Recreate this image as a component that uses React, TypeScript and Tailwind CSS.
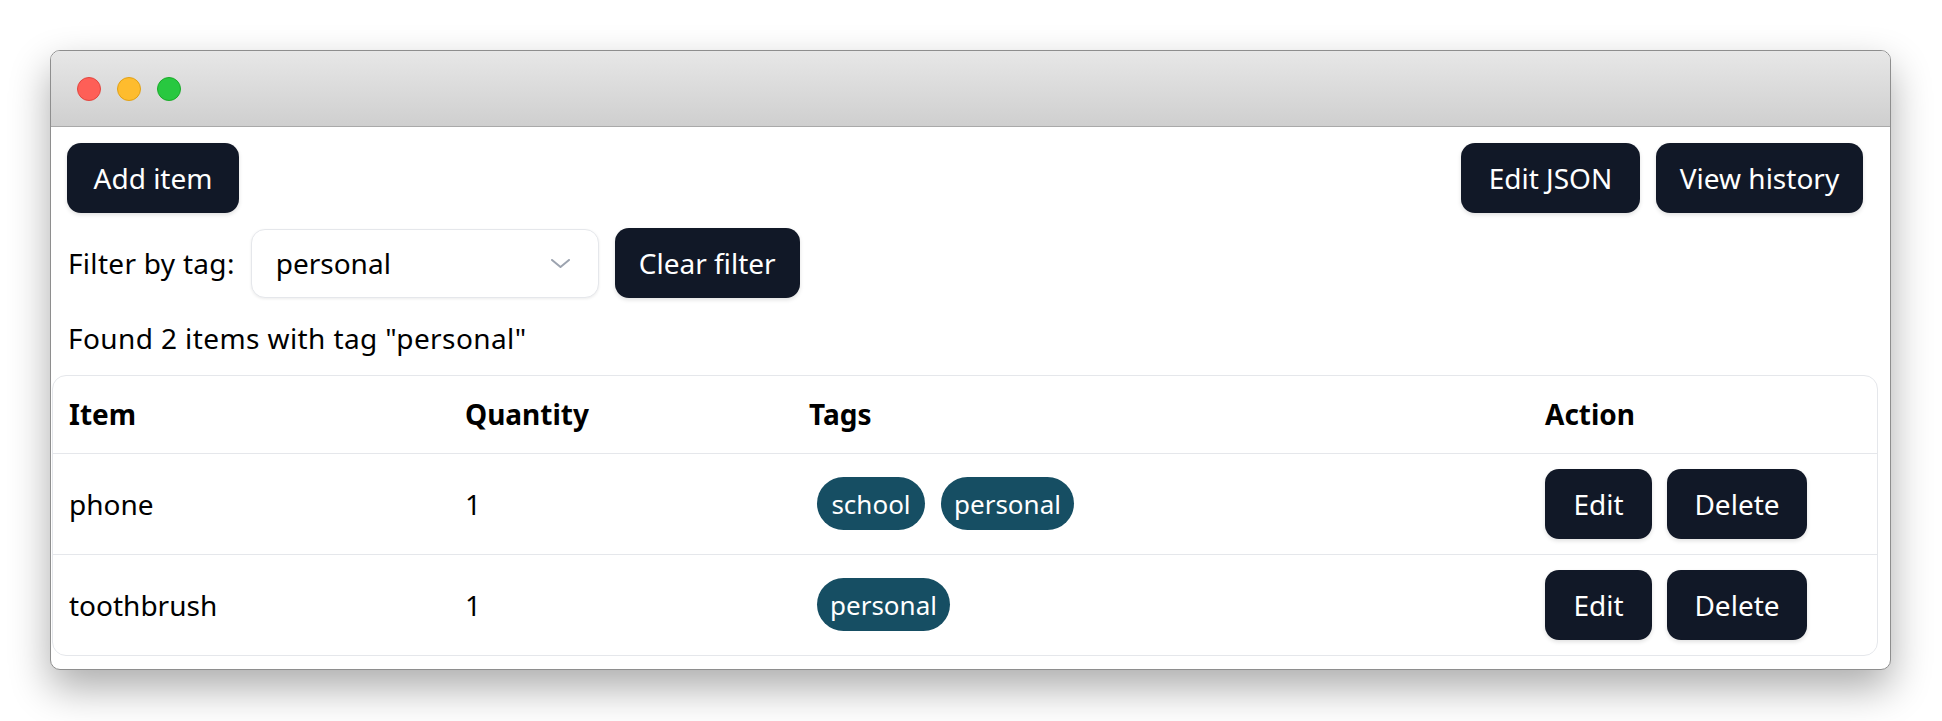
import React from "react";

const rows = [
  { name: "phone", qty: 1, tags: ["school", "personal"] },
  { name: "toothbrush", qty: 1, tags: ["personal"] },
];

// pill widths follow the screenshot
const tagWidth: Record<string, string> = {
  school: "w-[108px]",
  personal: "w-[133px]",
};

function DarkButton({ label, w }: { label: string; w: string }) {
  return (
    <button
      className={`${w} h-[70px] shrink-0 rounded-[14px] bg-[#111827] text-white text-[28px] leading-[42px] shadow-[0_2px_4px_rgba(0,0,0,0.12)] flex items-center justify-center`}
    >
      {label}
    </button>
  );
}

export default function App() {
  return (
    <div className="min-h-screen bg-white pt-[50px] pl-[50px] font-['Noto_Sans',sans-serif] text-black">
      <div className="w-[1841px] rounded-[10px] border border-[#8e8e8e] bg-white overflow-hidden shadow-[0_18px_40px_rgba(0,0,0,0.33)]">
        {/* title bar */}
        <div className="h-[76px] border-b border-[#a9a9a9] bg-gradient-to-b from-[#e7e7e7] to-[#cfcfcf] flex items-center gap-4 pl-[26px]">
          <span className="w-6 h-6 rounded-full bg-[#fe5f57] border border-[#e2463f]" />
          <span className="w-6 h-6 rounded-full bg-[#febc2e] border border-[#e1a116]" />
          <span className="w-6 h-6 rounded-full bg-[#28c840] border border-[#1aab29]" />
        </div>

        <div className="pl-px pr-[12px] pt-4 pb-[13px] text-[28px] leading-[42px]">
          <div className="px-[15px]">
            <div className="flex justify-between">
              <DarkButton label="Add item" w="w-[172px]" />
              <div className="flex gap-4">
                <DarkButton label="Edit JSON" w="w-[179px]" />
                <DarkButton label="View history" w="w-[207px]" />
              </div>
            </div>

            <div className="mt-[15px] flex items-center gap-4">
              <span className="pl-px tracking-[0.3px]">Filter by tag:</span>
              <div className="w-[348px] h-[69px] rounded-[14px] border border-[#e5e7eb] bg-white shadow-[0_1px_3px_rgba(0,0,0,0.08)] flex items-center justify-between pl-6 pr-[28px]">
                <span>personal</span>
                <svg width="19" height="9" viewBox="0 0 19 9" fill="none">
                  <path d="M1 1l8.5 7L18 1" stroke="#9ca3af" strokeWidth="2" strokeLinecap="round" strokeLinejoin="round" />
                </svg>
              </div>
              <DarkButton label="Clear filter" w="w-[185px]" />
            </div>

            <p className="mt-[19px] mb-4 pl-px tracking-[0.4px]">Found 2 items with tag "personal"</p>
          </div>

          <div className="rounded-[14px] border border-[#e5e7eb] overflow-hidden">
            <table className="w-full table-fixed border-collapse text-left">
              <colgroup>
                <col className="w-[396px]" />
                <col className="w-[344px]" />
                <col className="w-[736px]" />
                <col />
              </colgroup>
              <thead>
                <tr className="h-[77px]">
                  <th className="pl-4 font-bold">Item</th>
                  <th className="pl-4 font-bold">Quantity</th>
                  <th className="pl-4 font-bold">Tags</th>
                  <th className="pl-4 font-bold">Action</th>
                </tr>
              </thead>
              <tbody>
                {rows.map((r) => (
                  <tr key={r.name} className="h-[101px] border-t border-[#e5e7eb]">
                    <td className="pl-4">{r.name}</td>
                    <td className="pl-4">{r.qty}</td>
                    <td className="pl-4">
                      <div className="flex gap-4 pl-2">
                        {r.tags.map((t) => (
                          <span
                            key={t}
                            className={`${tagWidth[t] ?? ""} h-[53px] rounded-full bg-[#164e63] text-white text-[26px] flex items-center justify-center`}
                          >
                            {t}
                          </span>
                        ))}
                      </div>
                    </td>
                    <td className="pl-4">
                      <div className="flex gap-[15px]">
                        <DarkButton label="Edit" w="w-[107px]" />
                        <DarkButton label="Delete" w="w-[140px]" />
                      </div>
                    </td>
                  </tr>
                ))}
              </tbody>
            </table>
          </div>
        </div>
      </div>
    </div>
  );
}
